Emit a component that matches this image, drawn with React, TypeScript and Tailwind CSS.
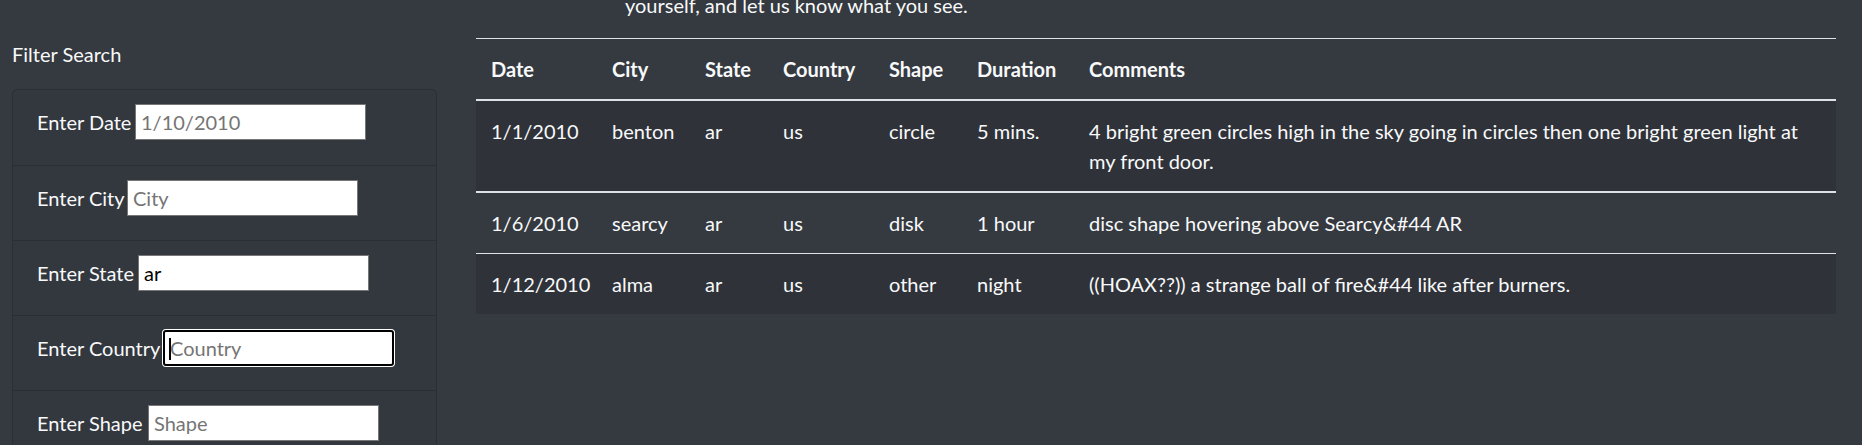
import React from "react";

type Sighting = {
  datetime: string;
  city: string;
  state: string;
  country: string;
  shape: string;
  duration: string;
  comments: string;
};

const SIGHTINGS: Sighting[] = [
  {
    datetime: "1/1/2010",
    city: "benton",
    state: "ar",
    country: "us",
    shape: "circle",
    duration: "5 mins.",
    comments:
      "4 bright green circles high in the sky going in circles then one bright green light at my front door.",
  },
  {
    datetime: "1/6/2010",
    city: "searcy",
    state: "ar",
    country: "us",
    shape: "disk",
    duration: "1 hour",
    comments: "disc shape hovering above Searcy&#44 AR",
  },
  {
    datetime: "1/12/2010",
    city: "alma",
    state: "ar",
    country: "us",
    shape: "other",
    duration: "night",
    comments: "((HOAX??)) a strange ball of fire&#44 like after burners.",
  },
];

const FILTERS = [
  { id: "datetime", label: "Enter Date", labelW: "w-[92px]", placeholder: "1/10/2010", value: "" },
  { id: "city", label: "Enter City", labelW: "w-[84px]", placeholder: "City", value: "" },
  { id: "state", label: "Enter State", labelW: "w-[95px]", placeholder: "State", value: "ar" },
  { id: "country", label: "Enter Country", labelW: "w-[120px]", placeholder: "Country", value: "", focused: true },
  { id: "shape", label: "Enter Shape", labelW: "w-[105px]", placeholder: "Shape", value: "" },
];

const COLUMNS = [
  { key: "datetime", label: "Date", w: "w-[121px]" },
  { key: "city", label: "City", w: "w-[93px]" },
  { key: "state", label: "State", w: "w-[78px]" },
  { key: "country", label: "Country", w: "w-[106px]" },
  { key: "shape", label: "Shape", w: "w-[88px]" },
  { key: "duration", label: "Duration", w: "w-[112px]" },
  { key: "comments", label: "Comments", w: "" },
] as const;

function FilterRow({ f, first }: { f: (typeof FILTERS)[number]; first: boolean }) {
  return (
    <li className={`flex h-[75px] items-start px-[24px] pt-[14px] ${first ? "" : "border-t border-[#2b2f35]"}`}>
      <div className="flex h-[36px] items-center">
        <label htmlFor={f.id} className={`${f.labelW} whitespace-nowrap`}>
          {f.label}
        </label>
        <div className="relative ml-[6px]">
          <input
            id={f.id}
            type="text"
            readOnly
            defaultValue={f.value}
            placeholder={f.placeholder}
            className={`h-[36px] w-[231px] bg-white px-[5px] text-[20px] text-black placeholder:text-[#757575] outline-none ${
              "focused" in f && f.focused
                ? "rounded-[3px] border-2 border-black ring-1 ring-white"
                : "border border-[#767676]"
            }`}
          />
          {"focused" in f && f.focused && (
            <span className="absolute left-[6px] top-[8px] h-[22px] w-[2px] bg-black" />
          )}
        </div>
      </div>
    </li>
  );
}

export default function App() {
  return (
    <div
      className="flex h-[445px] w-full overflow-hidden bg-[#353940] text-[20px] leading-[30px] text-[#f8f9fa]"
      style={{ fontFamily: "Lato, 'Open Sans', sans-serif" }}
    >
      {/* Filters */}
      <aside className="w-[476px] shrink-0 pl-[12px]">
        <h5 className="mt-[39px] mb-[20px]">Filter Search</h5>
        <ul className="w-[425px] rounded-[5px] border border-[#2b2f35] bg-[#33373e]">
          {FILTERS.map((f, i) => (
            <FilterRow key={f.id} f={f} first={i === 0} />
          ))}
        </ul>
      </aside>

      {/* Results */}
      <main className="flex-1 pr-[26px]">
        <p className="-mt-[10px] pl-[149px]">yourself, and let us know what you see.</p>
        <table className="mt-[18px] w-full table-fixed border-collapse text-left">
          <thead>
            <tr>
              {COLUMNS.map((c) => (
                <th
                  key={c.key}
                  className={`${c.w} border-t border-b-2 border-[#dee2e6] px-[15px] py-[15px] font-bold`}
                >
                  {c.label}
                </th>
              ))}
            </tr>
          </thead>
          <tbody>
            {SIGHTINGS.map((s, i) => (
              <tr key={s.datetime} className={i % 2 === 0 ? "bg-[#2f3239]" : ""}>
                {COLUMNS.map((c) => (
                  <td
                    key={c.key}
                    className={`px-[15px] py-[15px] align-top ${
                      i === 0 ? "border-b-2 border-[#dee2e6]" : i === 1 ? "border-b border-[#dee2e6]" : ""
                    }`}
                  >
                    {s[c.key]}
                  </td>
                ))}
              </tr>
            ))}
          </tbody>
        </table>
      </main>
    </div>
  );
}
